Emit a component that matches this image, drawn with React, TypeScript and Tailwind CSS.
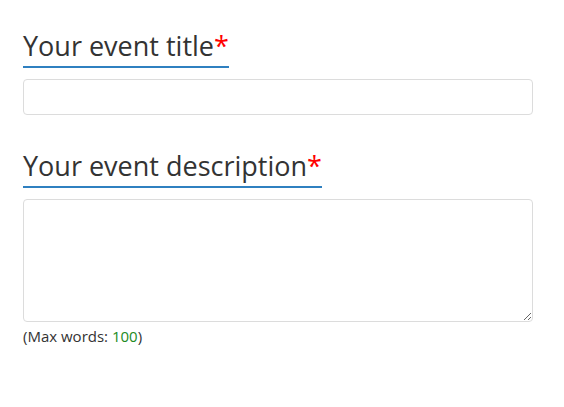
export default function App() {
    return (
        <div className="min-h-screen bg-white pt-[27px] pl-[23px]" style={{ fontFamily: '"Open Sans", sans-serif' }}>
            <div className="w-[510px]">
                <div className="mb-[11px]">
                    <h2 className="inline-block border-b-2 border-[#2f80c0] pb-[2px] text-[27px] leading-[37px] text-[#333]">
                        Your event title<span className="text-[#ff0000]">*</span>
                    </h2>
                </div>
                <input
                    type="text"
                    className="block h-[36px] w-full rounded-[4px] border border-[#dcdcdc] bg-white px-3 text-[14px] outline-none"
                />

                <div className="mt-[32px] mb-[11px]">
                    <h2 className="inline-block border-b-2 border-[#2f80c0] pb-[2px] text-[27px] leading-[37px] text-[#333]">
                        Your event description<span className="text-[#ff0000]">*</span>
                    </h2>
                </div>
                <textarea className="block h-[123px] w-full rounded-[4px] border border-[#dcdcdc] bg-white px-3 py-2 text-[14px] outline-none" />
                <p className="mt-[4px] text-[15px] leading-[20px] text-[#333]">
                    (Max words: <span className="text-[#228b22]">100</span>)
                </p>
            </div>
        </div>
    );
}
